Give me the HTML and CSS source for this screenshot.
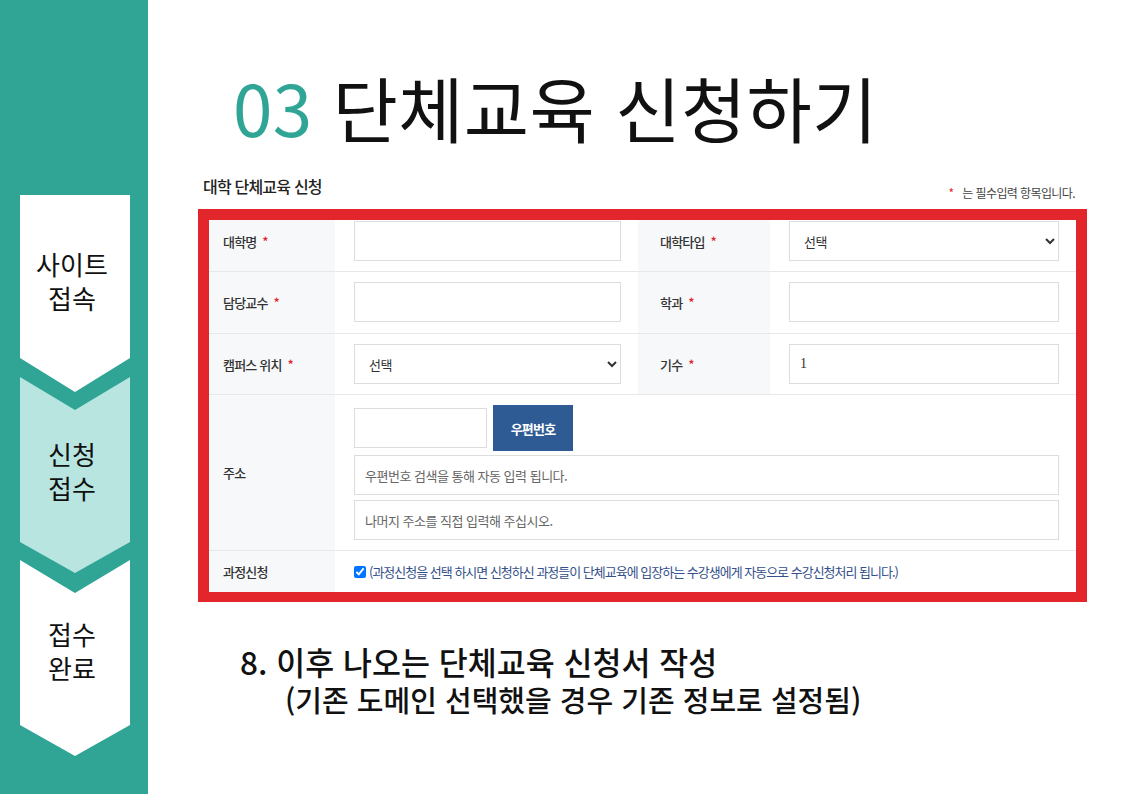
FILE: index.html
```html
<!DOCTYPE html>
<html lang="ko">
<head>
  <meta charset="UTF-8">
  <meta name="viewport" content="width=device-width, initial-scale=1.0">
  <title>단체교육 신청하기</title>
  <link rel="stylesheet" href="styles.css">
</head>
<body>
  <div class="page">
    <!-- Step chevrons -->
    <aside class="steps">
      <div class="step step-first">사이트<br>접속</div>
      <div class="step step-mid step-active">신청<br>접수</div>
      <div class="step step-mid step-last">접수<br>완료</div>
    </aside>

    <main class="content">
      <h1 class="title"><span class="num">03</span> 단체교육 신청하기</h1>

      <section class="form-area">
        <div class="form-head">
          <h2>대학 단체교육 신청</h2>
          <p class="req-note"><span class="star">*</span> 는 필수입력 항목입니다.</p>
        </div>

        <div class="frame">
          <table class="form-table">
            <colgroup>
              <col class="c-label1">
              <col class="c-field1">
              <col class="c-label2">
              <col>
            </colgroup>
            <tr class="row-first">
              <th>대학명 <span class="star">*</span></th>
              <td><input type="text"></td>
              <th class="label2">대학타입 <span class="star">*</span></th>
              <td><select><option>선택</option></select></td>
            </tr>
            <tr class="row-second">
              <th>담당교수 <span class="star">*</span></th>
              <td><input type="text"></td>
              <th class="label2">학과 <span class="star">*</span></th>
              <td><input type="text"></td>
            </tr>
            <tr>
              <th>캠퍼스 위치 <span class="star">*</span></th>
              <td><select><option>선택</option></select></td>
              <th class="label2">기수 <span class="star">*</span></th>
              <td><input type="text" class="num-input" value="1"></td>
            </tr>
            <tr class="row-addr">
              <th>주소</th>
              <td colspan="3">
                <div class="zip-line">
                  <input type="text" class="zip">
                  <button type="button">우편번호</button>
                </div>
                <input type="text" placeholder="우편번호 검색을 통해 자동 입력 됩니다.">
                <input type="text" placeholder="나머지 주소를 직접 입력해 주십시오.">
              </td>
            </tr>
            <tr class="row-last">
              <th>과정신청</th>
              <td colspan="3">
                <label class="check">
                  <input type="checkbox" checked>
                  <span>(과정신청을 선택 하시면 신청하신 과정들이 단체교육에 입장하는 수강생에게 자동으로 수강신청처리 됩니다.)</span>
                </label>
              </td>
            </tr>
          </table>
        </div>
      </section>

      <div class="caption">
        <p>8. 이후 나오는 단체교육 신청서 작성</p>
        <p class="sub">(기존 도메인 선택했을 경우 기존 정보로 설정됨)</p>
      </div>
    </main>
  </div>
</body>
</html>
```

FILE: styles.css
```css
body {
  margin: 0;
  font-family: "Noto Sans CJK KR", "Noto Sans", sans-serif;
  color: #111;
  background: #fff;
}
.page {
  display: flex;
  min-height: 794px;
}

/* left step bar */
.steps {
  width: 148px;
  flex-shrink: 0;
  background: #30a596;
  padding: 195px 18px 0 20px;
  box-sizing: border-box;
}
.step {
  width: 110px;
  background: #fff;
  text-align: center;
  font-size: 26px;
  line-height: 34px;
  color: #111;
  padding-right: 6px;
  box-sizing: border-box;
}
.step-first {
  height: 197px;
  padding-top: 52px;
  clip-path: polygon(0 0, 100% 0, 100% 163px, 50% 197px, 0 163px);
}
.step-mid {
  height: 196px;
  margin-top: -15px;
  padding-top: 60px;
  clip-path: polygon(0 0, 50% 33px, 100% 0, 100% 165px, 50% 196px, 0 165px);
}
.step-active {
  background: #b8e5e0;
}
.step-last {
  margin-top: -13px;
  padding-top: 57px;
}

/* right content */
.content {
  flex: 1;
  padding: 0 36px 0 50px;
}
.title {
  margin: 66px 0 0 35px;
  font-size: 71px;
  font-weight: 400;
  line-height: 80px;
  letter-spacing: 0.3px;
  color: #111;
}
.title .num {
  color: #30a596;
}

.form-area {
  margin-top: 29px;
}
.form-head {
  display: flex;
  justify-content: space-between;
  align-items: flex-end;
  padding: 0 12px 0 5px;
  height: 34px;
}
.form-head h2 {
  margin: 0;
  font-size: 16px;
  font-weight: 500;
  letter-spacing: -0.8px;
  color: #222;
  line-height: 22px;
  align-self: flex-start;
}
.req-note {
  margin: 0 0 8px;
  font-size: 12px;
  letter-spacing: -0.6px;
  color: #444;
}
.star {
  color: #e3262b;
  margin-left: 3px;
}
.req-note .star {
  margin: 0 6px 0 0;
}

.frame {
  border: 11px solid #e3262b;
  border-bottom-width: 10px;
  background: #fff;
}
.form-table {
  width: 100%;
  border-collapse: collapse;
  table-layout: fixed;
}
.c-label1 { width: 126px; }
.c-field1 { width: 303px; }
.c-label2 { width: 132px; }

.form-table th,
.form-table td {
  border-bottom: 1px solid #e7e8ea;
  padding: 10px 17px 10px 19px;
  vertical-align: middle;
}
.form-table th {
  background: #f7f8fa;
  text-align: left;
  padding-left: 14px;
  font-size: 13px;
  font-weight: 500;
  letter-spacing: -0.8px;
  color: #333;
}
.form-table th.label2 {
  padding-left: 22px;
}
.form-table .row-first th,
.form-table .row-first td {
  padding-top: 1px;
}
.form-table .row-second th,
.form-table .row-second td {
  padding-bottom: 11px;
}
.form-table .row-last th,
.form-table .row-last td {
  border-bottom: none;
  padding-top: 0;
  padding-bottom: 0;
  height: 41px;
}

input[type="text"],
select {
  display: block;
  width: 100%;
  height: 40px;
  box-sizing: border-box;
  border: 1px solid #dcdddf;
  border-radius: 0;
  background: #fff;
  padding: 0 10px;
  font-family: "Noto Sans CJK KR", sans-serif;
  font-size: 13px;
  letter-spacing: -0.5px;
  color: #333;
  outline: none;
}
input::placeholder {
  color: #666;
}
.num-input {
  font-family: "Liberation Serif", serif !important;
  font-size: 14px !important;
}

.zip-line {
  display: flex;
  align-items: center;
  gap: 6px;
  margin-bottom: 4px;
}
.zip-line .zip {
  width: 133px;
}
.zip-line button {
  width: 80px;
  height: 46px;
  border: none;
  background: #2f5b94;
  color: #fff;
  font-family: "Noto Sans CJK KR", sans-serif;
  font-size: 13px;
  font-weight: 700;
  letter-spacing: -0.8px;
}
.row-addr td > input + input {
  margin-top: 5px;
}

.check {
  display: flex;
  align-items: center;
  font-size: 13px;
  letter-spacing: -1px;
  color: #34508a;
  white-space: nowrap;
}
.check input {
  margin: 0 3px 0 0;
  width: 12px;
  height: 12px;
}

.caption {
  margin: 40px 0 0 42px;
}
.caption p {
  margin: 0;
  font-size: 31.5px;
  font-weight: 500;
  line-height: 38px;
  color: #111;
}
.caption .sub {
  margin-left: 45px;
  font-size: 29px;
}
```
